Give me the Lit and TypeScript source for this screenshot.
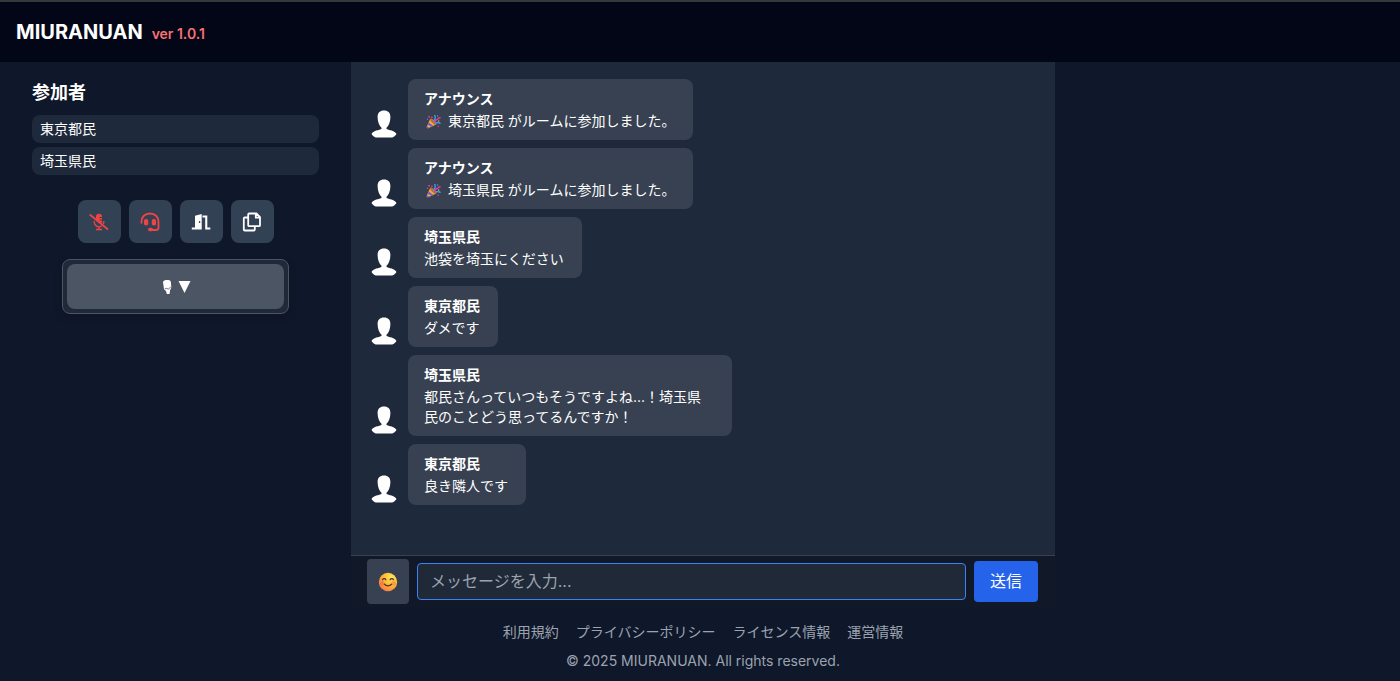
import { LitElement, html, css, svg } from "lit";
import { customElement, state } from "lit/decorators.js";

interface Message {
  name: string;
  text: string;
  party?: boolean;
}

const avatarIcon = html`<svg class="avatar" viewBox="0 0 26 28" aria-hidden="true">
  <path fill="#fff" d="M13 0.5c4.200 0 6.400 2.300 6.400 6.600 0 5-1.700 8.900-3.900 10.700v1.200c1.600 1 9 1.600 10 5.100-1.200 1.900-2.800 3.100-4.200 3.400H4.700C3.300 27.200 1.700 26 .5 24.100c1-3.500 8.400-4.100 10-5.100v-1.200C8.300 16 6.600 12.100 6.600 7.100 6.600 2.800 8.800.5 13 .5Z" />
</svg>`;

const partyIcon = html`<svg class="emoji" viewBox="0 0 16 16" role="img" aria-label="クラッカー">
  <path fill="#f9a83a" d="M4.500 5 11 11.300 2.300 15.200c-1 .4-1.900-.4-1.500-1.500Z" />
  <path fill="#6a5be0" d="m2.900 9 5 3.700-2.200 1L1.900 11.500ZM1.200 13.100l2.200 1.600-1.100.5c-1 .4-1.900-.4-1.500-1.500Z" />
  <ellipse cx="7.800" cy="8.200" rx="1.600" ry="4.500" transform="rotate(-45 7.800 8.200)" fill="#c96a2b" />
  <path fill="none" stroke="#3b9cf0" stroke-width="1.500" stroke-linecap="round" d="M8 7.500c2-1.500 2.300-3.500 1.400-6M10.300 9.700c1.700-1.100 3.300-.9 4.700.3" />
  <path fill="none" stroke="#f0389b" stroke-width="1.500" stroke-linecap="round" d="M9.500 8c.8-2.600 2.200-1.300 3-2.500.5-.9.900-1.500 2.500-1.500" />
  <g fill="#f0389b"><circle cx="3.300" cy="2.800" r="1" /><circle cx="6.300" cy="3.500" r=".9" /><circle cx="13" cy="13" r=".8" /></g>
  <g fill="#3b9cf0"><circle cx="12.300" cy="2" r=".8" /><circle cx="1.600" cy="5.500" r=".7" /></g>
  <circle cx="13.500" cy="7.500" r=".8" fill="#f9a83a" />
</svg>`;

const smileIcon = html`<svg class="smile" viewBox="0 0 20 20" aria-hidden="true">
  <defs>
    <radialGradient id="face" cx=".7" cy=".25" r=".85">
      <stop offset="0" stop-color="#ffe65c" />
      <stop offset=".55" stop-color="#ffb52e" />
      <stop offset="1" stop-color="#f5754f" />
    </radialGradient>
  </defs>
  <circle cx="10" cy="10" r="9.200" fill="url(#face)" />
  <circle cx="4.300" cy="11.300" r="2.200" fill="#f9604c" opacity=".55" />
  <circle cx="15.700" cy="11.300" r="2.200" fill="#f9604c" opacity=".4" />
  <path fill="none" stroke="#4b2f3d" stroke-width="1.200" stroke-linecap="round" d="M4.500 7.800c.8-1.500 2.600-1.500 3.400 0M12.100 7.800c.8-1.500 2.600-1.500 3.400 0M6.400 12.200c1.800 2.200 5.400 2.200 7.200 0" />
</svg>`;

const micOffIcon = svg`
  <path fill="currentColor" d="M7 5A3 3.200 0 0 1 13 5h-2.500v1H13V7.500h-2.500v1H13v1.500c0 .6-.2 1.100-.5 1.600L7 7.500Z" />
  <path fill="none" stroke="currentColor" stroke-width="1.300" d="M5.200 9v1a4.800 4.800 0 0 0 7.400 4M14.800 9v1c0 .8-.2 1.500-.5 2.100M10 15v2.500M7 17.500h6" />
  <path fill="none" stroke="currentColor" stroke-width="1.700" d="m.7 2.500 18.300 15" />`;

const headsetIcon = svg`
  <path fill="none" stroke="currentColor" stroke-width="1.800" d="M1.500 11.500V9.700C1.500 4.800 5 1.500 10 1.500s8.500 3.300 8.500 8.200v5.800a2.500 2.500 0 0 1-2.500 2.500h-5" />
  <rect x="4" y="7" width="4.200" height="6.500" rx="1.800" fill="currentColor" />
  <rect x="11.800" y="7" width="4.200" height="6.500" rx="1.800" fill="currentColor" />
  <rect x="8" y="15.800" width="5" height="3.500" rx="1.700" fill="currentColor" />`;

const doorIcon = svg`
  <path fill="currentColor" fill-rule="evenodd" d="M4 3.800 10.700 2v15.500H.8v-1.900H4Zm4.600 5.300a.8.900 0 1 0 0 1.800.8.900 0 0 0 0-1.800Z" />
  <path fill="currentColor" d="M11.500 3.600h4.800v12h3v1.900h-5.100V5.500h-2.700Z" />`;

const copyIcon = svg`
  <path fill="none" stroke="currentColor" stroke-width="1.800" stroke-linejoin="round" d="M7.200 1.500h7.200L18 5.200v8a1 1 0 0 1-1 1H7.200a1 1 0 0 1-1-1V2.500a1 1 0 0 1 1-1ZM13.800 1.700v4h4M6 5.500H2.800a1 1 0 0 0-1 1v11a1 1 0 0 0 1 1h9a1 1 0 0 0 1-1v-3" />`;

@customElement("app-root")
export class AppRoot extends LitElement {
  static styles = css`
    :host {
      display: flex;
      flex-direction: column;
      min-height: 100vh;
      box-sizing: border-box;
      border-top: 2px solid #36383c;
      background: #0f172a;
      color: #fff;
      font-family: Inter, "Noto Sans CJK JP", sans-serif;
      font-size: 14px;
      line-height: 20px;
    }
    * { box-sizing: border-box; }
    button, input { font: inherit; color: inherit; }
    button { border: 0; padding: 0; cursor: pointer; }
    h1, h2, ul, p { margin: 0; padding: 0; }
    ul { list-style: none; }

    .header {
      display: flex;
      align-items: baseline;
      gap: 9px;
      padding: 16px;
      background: #020617;
    }
    .brand { font-size: 20px; line-height: 28px; font-weight: 700; }
    .version { color: #f87171; font-weight: 600; }

    .main {
      flex: 1;
      display: grid;
      grid-template-columns: 351fr 704fr 345fr;
    }
    .side { padding: 17px 32px; }
    .title { font-size: 18px; line-height: 28px; font-weight: 700; }
    .members { display: grid; gap: 4px; margin-top: 8px; }
    .member { padding: 4px 8px; border-radius: 8px; line-height: 20px; background: #1e293b; }
    .controls { display: flex; justify-content: center; gap: 8px; margin: 25px 0 16px; }
    .control {
      display: grid;
      place-items: center;
      width: 43px;
      height: 43px;
      border-radius: 8px;
      background: #334155;
    }
    .control svg { width: 20px; height: 20px; }
    .off { color: #ef4444; }
    .device {
      margin: 0 30px;
      padding: 4px;
      border: 1px solid #4b5563;
      border-radius: 8px;
      background: #1f2937;
      box-shadow: 0 4px 8px rgb(0 0 0 / 0.15);
    }
    .device-button {
      display: flex;
      align-items: center;
      justify-content: center;
      gap: 5px;
      width: 100%;
      height: 45px;
      border-radius: 8px;
      background: #4b5563;
    }
    .mic { width: 12px; height: 16px; }
    .arrow { width: 13px; height: 13px; }

    .center { display: flex; flex-direction: column; }
    .messages {
      flex: 1;
      display: flex;
      flex-direction: column;
      gap: 8px;
      padding: 17px 20px 16px;
      background: #1e293b;
    }
    .message { display: flex; align-items: flex-end; gap: 11px; }
    .avatar { flex: none; width: 26px; height: 28px; margin-bottom: 2px; }
    .bubble {
      max-width: 324px;
      padding: 10px 18px 9px 16px;
      border-radius: 8px;
      background: #374151;
    }
    .name { font-weight: 700; margin-bottom: 2px; }
    .emoji { width: 15px; height: 15px; margin: 0 3px 0 2px; vertical-align: -3px; }

    .composer {
      display: flex;
      align-items: center;
      gap: 8px;
      padding: 3px 17px 3px 16px;
      border-top: 1px solid #374151;
      background: #111827;
    }
    .emoji-button {
      display: grid;
      place-items: center;
      width: 42px;
      height: 45px;
      border-radius: 4px;
      background: #374151;
    }
    .smile { width: 20px; height: 20px; }
    .field {
      flex: 1;
      min-width: 0;
      height: 37px;
      padding: 0 12px 2px;
      border: 1px solid #3b82f6;
      border-radius: 4px;
      background: #1f2937;
      font-size: 16px;
      outline: none;
    }
    .field::placeholder { color: #9ca3af; }
    .send {
      padding: 8px 16px;
      border-radius: 4px;
      background: #2563eb;
      font-size: 16px;
      line-height: 25px;
    }

    .footer { padding: 15px 16px 10px; color: #9ca3af; text-align: center; }
    .links { display: flex; flex-wrap: wrap; justify-content: center; gap: 17px; }
    .link { color: inherit; text-decoration: none; }
    .copyright { margin-top: 9px; }
  `;

  @state() private members = ["東京都民", "埼玉県民"];

  @state() private messages: Message[] = [
    { name: "アナウンス", text: "東京都民 がルームに参加しました。", party: true },
    { name: "アナウンス", text: "埼玉県民 がルームに参加しました。", party: true },
    { name: "埼玉県民", text: "池袋を埼玉にください" },
    { name: "東京都民", text: "ダメです" },
    { name: "埼玉県民", text: "都民さんっていつもそうですよね...！埼玉県民のことどう思ってるんですか！" },
    { name: "東京都民", text: "良き隣人です" },
  ];

  private controls = [
    { label: "マイク", icon: micOffIcon, off: true },
    { label: "スピーカー", icon: headsetIcon, off: true },
    { label: "退室", icon: doorIcon, off: false },
    { label: "コピー", icon: copyIcon, off: false },
  ];

  private links = ["利用規約", "プライバシーポリシー", "ライセンス情報", "運営情報"];

  render() {
    return html`
      <header class="header">
        <h1 class="brand">MIURANUAN</h1>
        <span class="version">ver 1.0.1</span>
      </header>
      <main class="main">
        <aside class="side">
          <h2 class="title">参加者</h2>
          <ul class="members">
            ${this.members.map((m) => html`<li class="member">${m}</li>`)}
          </ul>
          <div class="controls">
            ${this.controls.map(
              (c) => html`<button class="control ${c.off ? "off" : ""}" aria-label=${c.label}>
                <svg viewBox="0 0 20 20" aria-hidden="true">${c.icon}</svg>
              </button>`
            )}
          </div>
          <div class="device">
            <button class="device-button" aria-label="マイクを選択">
              <svg class="mic" viewBox="0 0 12 16" aria-hidden="true">
                <path fill="#fff" d="M2 3C2.500 1.500 4 1 6 1s3.500.3 3.900 2L10.300 8.500 9 11.500 8.600 15H5.800L5 12 3 10.500Z" />
                <path fill="none" stroke="#4b5563" stroke-width=".8" d="m3.500 10 2.200-.6 1.500.8 2.600-2.200" />
              </svg>
              <svg class="arrow" viewBox="0 0 13 13" aria-hidden="true"><path fill="#fff" d="M.5 1h12l-6 12Z" /></svg>
            </button>
          </div>
        </aside>
        <section class="center">
          <div class="messages">
            ${this.messages.map(
              (m) => html`<article class="message">
                ${avatarIcon}
                <div class="bubble">
                  <p class="name">${m.name}</p>
                  <p>${m.party ? html`${partyIcon} ` : ""}${m.text}</p>
                </div>
              </article>`
            )}
          </div>
          <form class="composer" @submit=${(e: Event) => e.preventDefault()}>
            <button class="emoji-button" type="button" aria-label="絵文字">${smileIcon}</button>
            <input class="field" type="text" aria-label="メッセージ" placeholder="メッセージを入力..." />
            <button class="send" type="submit">送信</button>
          </form>
          <footer class="footer">
            <nav class="links">
              ${this.links.map((l) => html`<a class="link" href="#">${l}</a>`)}
            </nav>
            <p class="copyright">© 2025 MIURANUAN. All rights reserved.</p>
          </footer>
        </section>
      </main>
    `;
  }
}
